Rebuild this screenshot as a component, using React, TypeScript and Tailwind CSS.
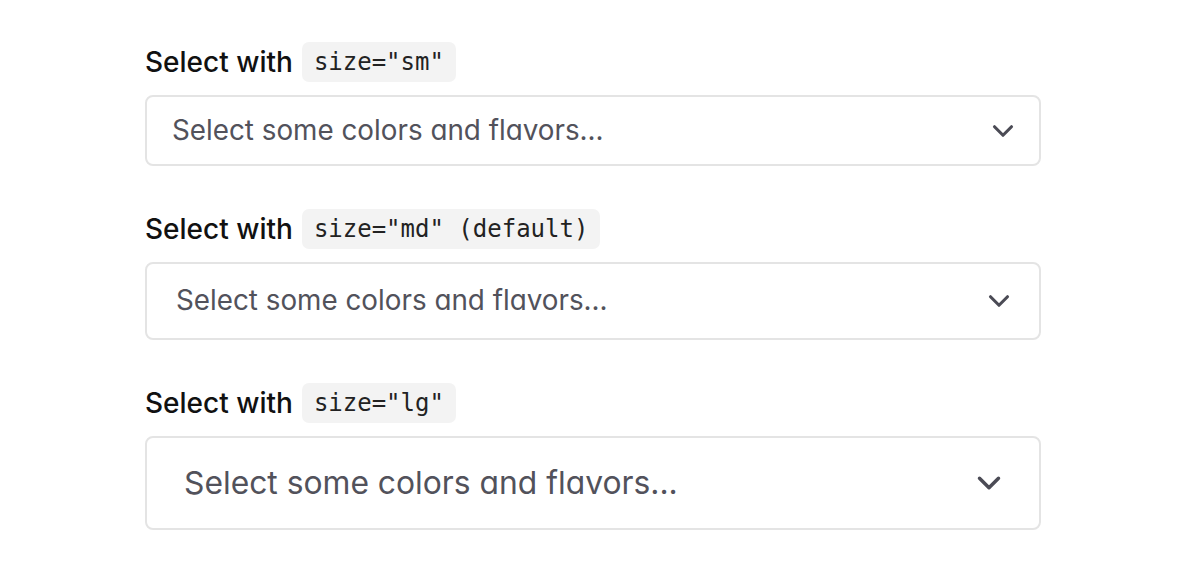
import React from "react";

type SizeKey = "sm" | "md" | "lg";

const sizes: Record<
  SizeKey,
  { code: string; box: string; text: string; icon: string }
> = {
  sm: {
    code: 'size="sm"',
    box: "h-[71px] pl-[25px] pr-[19px]",
    text: "text-[27.8px]",
    icon: "w-[34px] h-[34px]",
  },
  md: {
    code: 'size="md" (default)',
    box: "h-[78px] pl-[29px] pr-[23px]",
    text: "text-[27.8px]",
    icon: "w-[34px] h-[34px]",
  },
  lg: {
    code: 'size="lg"',
    box: "h-[94px] pl-[37px] pr-[31px]",
    text: "text-[31.8px]",
    icon: "w-[38px] h-[38px]",
  },
};

function ChevronDown({ className }: { className: string }) {
  return (
    <svg
      viewBox="0 0 24 24"
      fill="none"
      stroke="currentColor"
      strokeWidth="2.2"
      strokeLinecap="round"
      strokeLinejoin="round"
      className={className}
    >
      <path d="m6 9 6 6 6-6" />
    </svg>
  );
}

function SizedSelect({ size }: { size: SizeKey }) {
  const s = sizes[size];
  return (
    <section>
      {/* Label */}
      <header className="flex items-center gap-[9px] h-[40px]">
        <h3 className="text-[28px] font-medium text-[#111111] leading-none">
          Select with
        </h3>
        <code className="h-[40px] flex items-center px-[12px] rounded-[7px] bg-[#f3f3f3] text-[24px] text-[#222222] font-['DejaVu_Sans_Mono',monospace]">
          {s.code}
        </code>
      </header>

      {/* Select box */}
      <div
        className={`mt-[13px] flex items-center border-2 border-[#e4e4e4] rounded-[8px] bg-white ${s.box}`}
      >
        <span
          className={`flex-1 text-[#52525b] ${s.text} [font-feature-settings:'cv11']`}
        >
          Select some colors and flavors...
        </span>
        <ChevronDown className={`text-[#4b4b55] ${s.icon}`} />
      </div>
    </section>
  );
}

export default function App() {
  return (
    <div className="w-[1188px] h-[572px] bg-white font-['Inter',sans-serif]">
      <div className="w-[896px] ml-[145px] pt-[42px] flex flex-col gap-[43px]">
        <SizedSelect size="sm" />
        <SizedSelect size="md" />
        <SizedSelect size="lg" />
      </div>
    </div>
  );
}
